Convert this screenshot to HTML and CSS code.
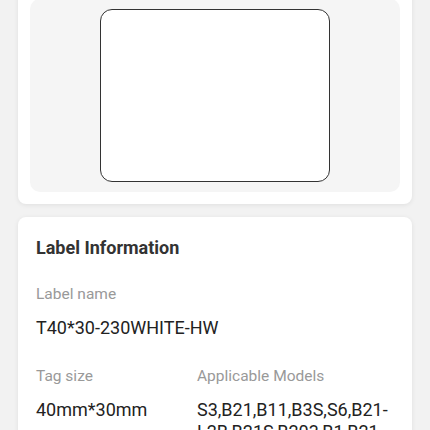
FILE: index.html
```html
<!DOCTYPE html>
<html>
<head>
<meta charset="utf-8">
<link rel="stylesheet" href="styles.css">
</head>
<body>
<div class="page">
  <div class="card preview-card">
    <div class="preview">
      <div class="label"></div>
    </div>
  </div>
  <div class="card info-card">
    <div class="title">Label Information</div>
    <div class="field">
      <div class="key">Label name</div>
      <div class="val">T40*30-230WHITE-HW</div>
    </div>
    <div class="row">
      <div class="field col1">
        <div class="key">Tag size</div>
        <div class="val">40mm*30mm</div>
      </div>
      <div class="field col2">
        <div class="key">Applicable Models</div>
        <div class="val">S3,B21,B11,B3S,S6,B21-L2B,B21S,B203,B1,B21-C2B</div>
      </div>
    </div>
  </div>
</div>
</body>
</html>
```
FILE: styles.css
```css
html, body {
  margin: 0;
  padding: 0;
  background: #f2f2f2;
  height: 430px;
  overflow: hidden;
  font-family: Roboto, "Liberation Sans", sans-serif;
}
.page {
  margin-top: -13px;
  padding: 0 18px;
  display: flex;
  flex-direction: column;
  gap: 13px;
}
.card {
  background: #fff;
  border-radius: 8px;
  box-shadow: 0 1px 5px rgba(0,0,0,0.08);
}
.preview-card {
  padding: 12px;
}
.preview {
  background: #f5f5f5;
  border-radius: 10px;
  padding: 10px 0;
  display: flex;
  justify-content: center;
}
.label {
  box-sizing: border-box;
  width: 230px;
  height: 173px;
  border: 1.5px solid #333;
  border-radius: 12px;
  background: #fff;
}
.info-card {
  padding: 19px 18px 20px;
}
.title {
  font-size: 18px;
  font-weight: 700;
  color: #333;
  line-height: 24px;
  margin-bottom: 24px;
}
.field {
  display: flex;
  flex-direction: column;
}
.key {
  font-size: 15.5px;
  color: #999;
  line-height: 20px;
}
.val {
  font-size: 18px;
  color: #222;
  line-height: 22px;
  margin-top: 13px;
  margin-bottom: 27px;
}
.row {
  display: flex;
}
.col1 {
  width: 161px;
  flex-shrink: 0;
}
.col2 {
  flex: 1;
  min-width: 0;
}
```
